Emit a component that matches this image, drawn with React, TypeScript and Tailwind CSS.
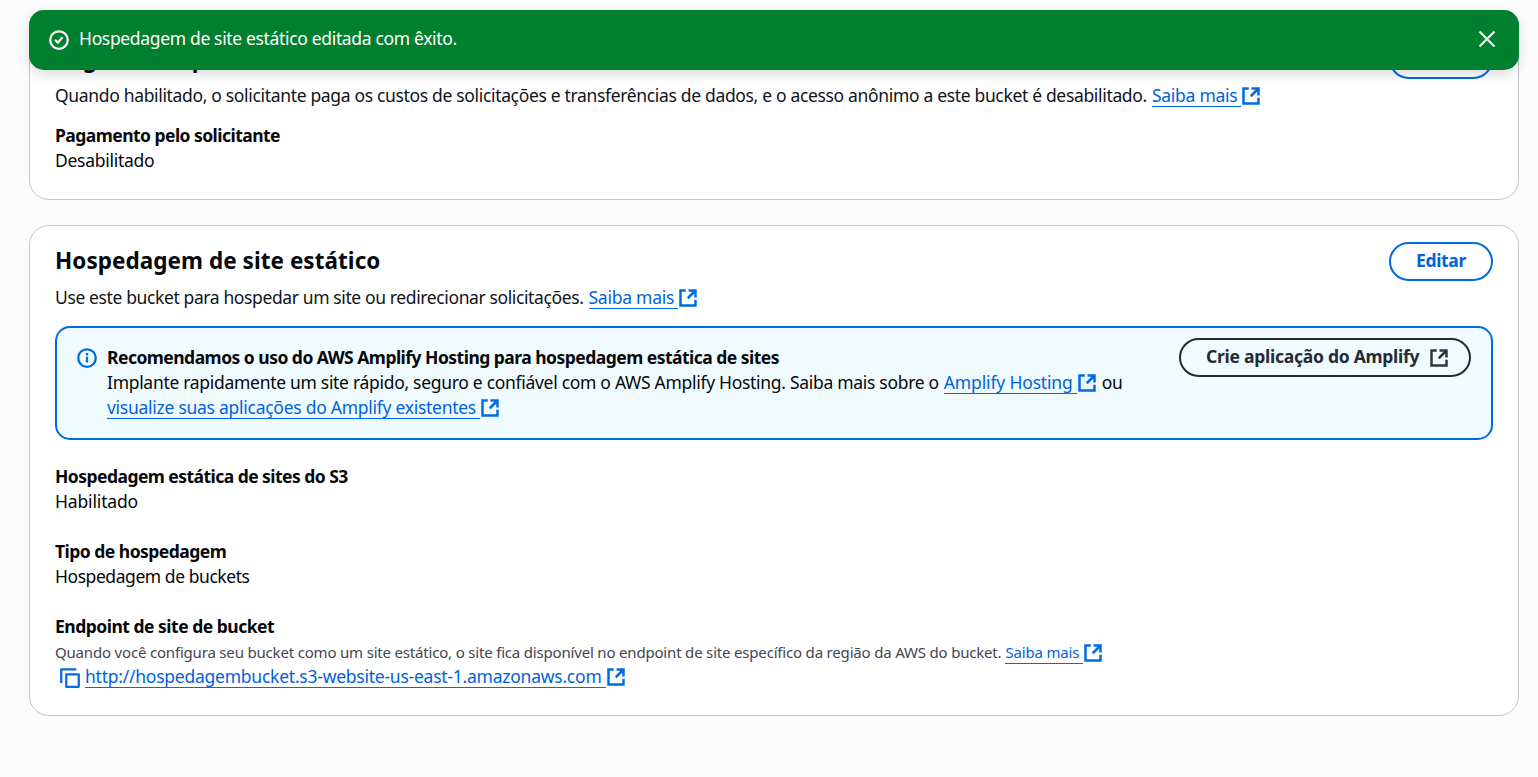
import type { ReactNode } from "react";

function ExternalIcon({ className = "" }: { className?: string }) {
  return (
    <svg viewBox="0 0 16 16" fill="none" stroke="currentColor" strokeWidth="2" className={`inline-block size-5 shrink-0 ${className}`}>
      <path d="M14 9.4V14H2V2h4.2M8.4 2H14v5.6M7.8 8.2 14 2" />
    </svg>
  );
}

function ExtLink({ children, track, className = "" }: { children: ReactNode; track: string; className?: string }) {
  return (
    <a href="#" className={`flex h-[25px] items-center text-[#0062dc] ${className}`}>
      <span className={`flex h-[22px] items-center border-b border-[#006ce0] pr-1 ${track}`}>
        <span>{children}</span>
      </span>
      <ExternalIcon className="text-[#006ce0]" />
    </a>
  );
}

function Field({ label, track, children }: { label: string; track: string; children: ReactNode }) {
  return (
    <div>
      <div className={`font-bold ${track}`}>{label}</div>
      {children}
    </div>
  );
}

function EditButton() {
  return (
    <button className="h-[39px] w-[104px] rounded-full border-2 border-[#006ce0] bg-white pb-0.5 font-bold tracking-[-0.33px] text-[#0062dc]">
      Editar
    </button>
  );
}

function Card({ title, track, description, className = "", children }: { title: string; track: string; description: ReactNode; className?: string; children: ReactNode }) {
  return (
    <section className={`rounded-[20px] border border-[#c6c6cd] bg-white px-[25px] pt-4 ${className}`}>
      <header>
        <div className="flex h-[43px] items-start justify-between">
          <h2 className={`pt-1 text-[22.5px] leading-[30px] font-bold ${track}`}>{title}</h2>
          <EditButton />
        </div>
        <div className="flex h-[25px] items-center text-[#0f141a]">{description}</div>
      </header>
      {children}
    </section>
  );
}

export default function App() {
  return (
    <div className="relative h-[777px] overflow-hidden bg-[#fcfcfd] pt-[23px] pr-[19px] pl-[29px] font-['Noto_Sans',sans-serif] text-[17.5px] leading-[25px] whitespace-nowrap text-[#05070b]">
      <div role="status" className="absolute top-[10px] right-[19px] left-[29px] z-10 flex h-[60px] items-center rounded-[15px] bg-[#00802f] pr-[22px] pl-5 text-white shadow-[0_5px_12px_rgba(15,20,26,0.14)]">
        <svg viewBox="0 0 16 16" fill="none" stroke="currentColor" strokeWidth="1.8" className="size-5">
          <circle cx="8" cy="8" r="7" />
          <path d="m4.9 7.9 2.2 2.2 3.7-4.3" />
        </svg>
        <span className="ml-[10px] pb-[3px] tracking-[-0.34px]">Hospedagem de site estático editada com êxito.</span>
        <button aria-label="Fechar" className="ml-auto pb-0.5 text-[#ebebf0]">
          <svg viewBox="0 0 16 16" fill="none" stroke="currentColor" strokeWidth="1.8" className="size-5">
            <path d="m2 2 12 12M14 2 2 14" />
          </svg>
        </button>
      </div>

      <Card
        title="Pagamento pelo solicitante"
        track="tracking-[0.2px]"
        className="h-[177px]"
        description={
          <>
            <span className="mr-[5px] tracking-[-0.334px]">
              Quando habilitado, o solicitante paga os custos de solicitações e transferências de dados, e o acesso anônimo a este bucket é desabilitado.
            </span>
            <ExtLink track="tracking-[-0.26px]">Saiba mais</ExtLink>
          </>
        }
      >
        <div className="mt-[15px]">
          <Field label="Pagamento pelo solicitante" track="tracking-[-0.54px]">
            <div className="tracking-[-0.28px]">Desabilitado</div>
          </Field>
        </div>
      </Card>

      <Card
        title="Hospedagem de site estático"
        track="tracking-[0.05px]"
        className="mt-[25px] h-[491px]"
        description={
          <>
            <span className="mr-[5px] tracking-[-0.384px]">Use este bucket para hospedar um site ou redirecionar solicitações.</span>
            <ExtLink track="tracking-[-0.25px]">Saiba mais</ExtLink>
          </>
        }
      >
        <div className="mt-4 flex h-[114px] items-start rounded-[15px] border-2 border-[#006ce0] bg-[#f0fbff] pt-[10px] pr-5 pl-5">
          <svg viewBox="0 0 16 16" fill="none" stroke="currentColor" strokeWidth="1.8" className="mt-[10px] size-5 text-[#006ce0]">
            <circle cx="8" cy="8" r="7" />
            <path d="M8 11.5V7M8 6V4" />
          </svg>
          <div className="ml-[10px] pt-[7px]">
            <div className="font-bold tracking-[-0.523px]">Recomendamos o uso do AWS Amplify Hosting para hospedagem estática de sites</div>
            <div className="flex items-center">
              <span className="mr-[5px] tracking-[-0.3px]">
                Implante rapidamente um site rápido, seguro e confiável com o AWS Amplify Hosting. Saiba mais sobre o
              </span>
              <ExtLink track="tracking-[-0.16px]">Amplify Hosting</ExtLink>
              <span className="ml-[5px] tracking-[-0.3px]">ou</span>
            </div>
            <ExtLink track="tracking-[-0.27px]">visualize suas aplicações do Amplify existentes</ExtLink>
          </div>
          <button className="ml-auto flex h-[39px] w-[292px] items-center rounded-full border-2 border-[#232b37] pl-[25px] font-bold tracking-[-0.26px] text-[#232b37]">
            <span className="pb-0.5">Crie aplicação do Amplify</span>
            <ExternalIcon className="ml-[10px] text-[#2f3742]" />
          </button>
        </div>

        <div className="mt-6 flex flex-col gap-[25px]">
          <Field label="Hospedagem estática de sites do S3" track="tracking-[-0.54px]">
            <div className="tracking-[-0.16px]">Habilitado</div>
          </Field>
          <Field label="Tipo de hospedagem" track="tracking-[-0.52px]">
            <div className="tracking-[-0.44px]">Hospedagem de buckets</div>
          </Field>
          <Field label="Endpoint de site de bucket" track="tracking-[-0.5px]">
            <div className="flex h-[25px] items-center pt-0.5 text-[15px] text-[#424650]">
              <span className="mr-1 tracking-[-0.184px]">
                Quando você configura seu bucket como um site estático, o site fica disponível no endpoint de site específico da região da AWS do bucket.
              </span>
              <ExtLink track="tracking-[-0.18px]">Saiba mais</ExtLink>
            </div>
            <div className="flex h-[25px] items-center">
              <button aria-label="Copiar" className="ml-[5px] pt-0.5 text-[#006ce0]">
                <svg viewBox="0 0 16 16" fill="none" stroke="currentColor" strokeWidth="1.8" className="size-5">
                  <path d="M5 5h10v10H5zM1 12V1h12" strokeLinejoin="round" />
                </svg>
              </button>
              <ExtLink track="tracking-[-0.24px]" className="ml-[5px]">
                http://hospedagembucket.s3-website-us-east-1.amazonaws.com
              </ExtLink>
            </div>
          </Field>
        </div>
      </Card>
    </div>
  );
}
